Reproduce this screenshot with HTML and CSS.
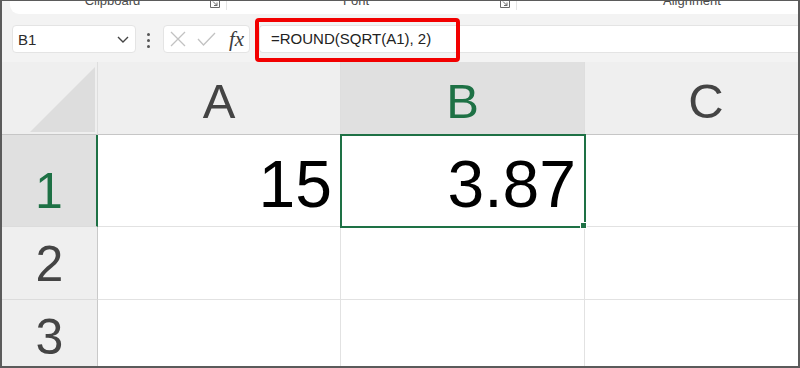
FILE: index.html
```html
<!DOCTYPE html>
<html lang="en">
<head>
  <meta charset="UTF-8">
  <meta name="viewport" content="width=device-width, initial-scale=1.0">
  <title>ROUND(SQRT) example</title>
  <link rel="stylesheet" href="styles.css">
</head>
<body>
  <div class="window">
    <div class="ribbon">
      <div class="ribbon-panel">
        <div class="group group-clipboard">
          <span class="group-label">Clipboard</span>
          <svg class="launcher" width="12" height="9" viewBox="0 0 12 9"><path d="M1.5 0v7.5h9V0" fill="none" stroke="#6a6a6a" stroke-width="1"/><path d="M4 1.5l4 4M8 2.5v3H5" fill="none" stroke="#6a6a6a" stroke-width="1"/></svg>
        </div>
        <div class="group group-font">
          <span class="group-label">Font</span>
          <svg class="launcher" width="12" height="9" viewBox="0 0 12 9"><path d="M1.5 0v7.5h9V0" fill="none" stroke="#6a6a6a" stroke-width="1"/><path d="M4 1.5l4 4M8 2.5v3H5" fill="none" stroke="#6a6a6a" stroke-width="1"/></svg>
        </div>
        <div class="group group-align">
          <span class="group-label">Alignment</span>
        </div>
      </div>
    </div>

    <div class="formula-bar">
      <div class="name-box">
        <span>B1</span>
        <svg width="12" height="7" viewBox="0 0 12 7"><path d="M1 1l5 5 5-5" fill="none" stroke="#444" stroke-width="1.4"/></svg>
      </div>
      <div class="grip"><i></i><i></i><i></i></div>
      <div class="fx-box">
        <svg class="icon-cancel" width="16" height="16" viewBox="0 0 16 16"><path d="M1 1l14 14M15 1L1 15" stroke="#c2c2c2" stroke-width="1.3"/></svg>
        <svg class="icon-enter" width="19" height="14" viewBox="0 0 19 14"><path d="M1 7l5.5 6L18 1" fill="none" stroke="#c2c2c2" stroke-width="1.3"/></svg>
        <span class="fx">fx</span>
      </div>
      <div class="formula-input">=ROUND(SQRT(A1), 2)</div>
      <div class="highlight"></div>
    </div>

    <div class="sheet">
      <div class="corner"><div class="corner-mark"></div></div>
      <div class="col-head">A</div>
      <div class="col-head active">B</div>
      <div class="col-head">C</div>

      <div class="row-head active">1</div>
      <div class="cell">15</div>
      <div class="cell selected">3.87</div>
      <div class="cell"></div>

      <div class="row-head">2</div>
      <div class="cell"></div>
      <div class="cell"></div>
      <div class="cell"></div>

      <div class="row-head">3</div>
      <div class="cell"></div>
      <div class="cell"></div>
      <div class="cell"></div>
    </div>
  </div>
</body>
</html>
```

FILE: styles.css
```css
* {
  box-sizing: border-box;
  margin: 0;
  padding: 0;
}

body {
  font-family: "Liberation Sans", Arial, sans-serif;
  background-color: #fff;
}

.window {
  width: 800px;
  height: 368px;
  border: 2px solid #5b5b5b;
  border-top-width: 1px;
  background-color: #f3f3f3;
  overflow: hidden;
}

/* ribbon strip, cut off at the top */
.ribbon {
  height: 13px;
  overflow: hidden;
}

.ribbon-panel {
  display: flex;
  height: 13px;
  margin-left: 8px;
  background-color: #fff;
  border-bottom-left-radius: 9px;
}

.group {
  display: flex;
  align-items: flex-start;
  border-right: 1px solid #e4e4e4;
  height: 9px;
}

.group-label {
  margin-top: -7px;
  font-size: 13px;
  line-height: 13px;
  color: #4a4a4a;
}

.launcher {
  margin-top: -1px;
  margin-right: 5px;
}

.group-clipboard {
  width: 217px;
}

.group-clipboard .group-label {
  flex: 1;
  text-align: center;
  padding-left: 6px;
}

.group-font {
  width: 290px;
}

.group-font .group-label {
  flex: 1;
  text-align: center;
  padding-right: 14px;
}

.group-align {
  flex: 1;
  border-right: none;
  padding-left: 146px;
}

/* formula bar */
.formula-bar {
  position: relative;
  display: flex;
  align-items: flex-start;
  height: 48px;
  padding: 11px 0 0 10px;
}

.name-box {
  display: flex;
  align-items: center;
  justify-content: space-between;
  width: 124px;
  height: 28px;
  padding: 0 6px 0 5px;
  background-color: #fff;
  border: 1px solid #e4e4e4;
  border-radius: 4px;
  font-size: 15px;
  color: #2b2b2b;
}

.grip {
  display: flex;
  flex-direction: column;
  gap: 3px;
  width: 4px;
  margin: 8px 12px 0 11px;
}

.grip i {
  display: block;
  width: 3px;
  height: 3px;
  background-color: #555;
  border-radius: 50%;
}

.fx-box {
  display: flex;
  align-items: center;
  width: 87px;
  height: 28px;
  padding-left: 6px;
  margin-right: 9px;
  background-color: #fff;
  border: 1px solid #e4e4e4;
  border-radius: 4px;
}

.icon-enter {
  margin-left: 11px;
}

.fx {
  margin-left: 13px;
  font-family: "Liberation Serif", "Times New Roman", serif;
  font-style: italic;
  font-size: 21px;
  color: #3c3c3c;
}

.formula-input {
  flex: 1;
  height: 28px;
  padding-left: 11px;
  background-color: #fff;
  border: 1px solid #e4e4e4;
  border-right: none;
  border-radius: 4px 0 0 4px;
  font-size: 15px;
  line-height: 26px;
  color: #222;
}

/* red annotation box over the formula */
.highlight {
  position: absolute;
  left: 253px;
  top: 4px;
  width: 205px;
  height: 44px;
  border: 4px solid #f20000;
  border-radius: 4px;
  z-index: 2;
}

/* worksheet grid */
.sheet {
  display: grid;
  grid-template-columns: 96px 243px 244px 243px;
  grid-template-rows: 73px 92px 73px 73px;
  height: 304px;
  overflow: hidden;
  background-color: #fff;
}

.corner {
  display: flex;
  justify-content: flex-end;
  align-items: flex-end;
  padding: 0 2px 2px 0;
  background-color: #efefef;
  border-right: 1px solid #dedede;
  border-bottom: 1px solid #c6c6c6;
}

.corner-mark {
  width: 65px;
  height: 65px;
  background-color: #dddddd;
  clip-path: polygon(100% 0, 100% 100%, 0 100%);
}

.col-head {
  display: flex;
  justify-content: center;
  align-items: center;
  padding-top: 6px;
  background-color: #efefef;
  border-right: 1px solid #dedede;
  border-bottom: 1px solid #c6c6c6;
  font-size: 49px;
  line-height: 1;
  color: #444;
}

.row-head {
  display: flex;
  justify-content: center;
  align-items: flex-end;
  padding-bottom: 10px;
  background-color: #efefef;
  border-right: 1px solid #c9c9c9;
  border-bottom: 1px solid #dcdcdc;
  font-size: 50px;
  line-height: 1;
  color: #444;
}

.col-head.active,
.row-head.active {
  background-color: #e0e0e0;
  color: #1e7145;
}

.row-head.active {
  border-right: 2px solid #1e7145;
}

.cell {
  display: flex;
  justify-content: flex-end;
  align-items: flex-end;
  padding: 0 8px 9px 0;
  border-right: 1px solid #e2e2e2;
  border-bottom: 1px solid #e2e2e2;
  font-size: 66px;
  line-height: 1;
  color: #000;
}

.cell.selected {
  position: relative;
  z-index: 1;
  outline: 2px solid #1e7145;
  outline-offset: -1px;
}

.cell.selected::after {
  content: "";
  position: absolute;
  right: -3px;
  bottom: -3px;
  width: 5px;
  height: 5px;
  background-color: #1e7145;
  border: 1px solid #fff;
  box-sizing: content-box;
}
```
